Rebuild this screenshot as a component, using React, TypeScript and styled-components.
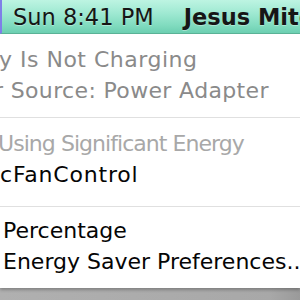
import React from "react";
import styled, { createGlobalStyle } from "styled-components";

const GlobalStyle = createGlobalStyle`
  html, body {
    margin: 0;
    padding: 0;
    background: #a9a9a9;
    overflow: hidden;
  }
`;

const Screen = styled.div`
  width: 300px;
  height: 300px;
  overflow: hidden;
  display: flex;
  flex-direction: column;
  background: linear-gradient(90deg, #b0b0b0 0%, #a8a8a8 90%, #9a9a9a 100%);
  font-family: "DejaVu Sans", "Liberation Sans", sans-serif;
`;

const MenuBar = styled.div`
  height: 33px;
  flex: none;
  display: flex;
  align-items: center;
  gap: 30px;
  padding-left: 11px;
  border-left: 2px solid #7f7fe8;
  border-bottom: 1px solid #5cb598;
  background: linear-gradient(180deg, #bdf4e2 0%, #9fe9d2 40%, #82dcc0 75%, #6ccfb1 100%);
  white-space: nowrap;
  overflow: hidden;
`;

const BarText = styled.span<{ $bold?: boolean }>`
  font-size: 22.5px;
  font-weight: ${(p) => (p.$bold ? 700 : 400)};
  color: #161616;
  text-shadow: 0 1px 0 rgba(255, 255, 255, 0.35);
  line-height: 33px;
  padding-top: 1px;
`;

const Menu = styled.div`
  flex: none;
  background: #ffffff;
  padding: 10px 0 10px;
  box-shadow: 0 2px 3px rgba(0, 0, 0, 0.25);
  overflow: hidden;
`;

const Item = styled.div<{
  $tone: "dim" | "faint" | "normal";
  $offset: number;
  $h?: number;
  $spacing?: number;
}>`
  height: ${(p) => p.$h ?? 31}px;
  line-height: ${(p) => p.$h ?? 31}px;
  font-size: 22px;
  white-space: nowrap;
  margin-left: ${(p) => p.$offset}px;
  letter-spacing: ${(p) => p.$spacing ?? 0}px;
  color: ${(p) =>
    p.$tone === "normal" ? "#050505" : p.$tone === "dim" ? "#8a8a8a" : "#a8a8a8"};
`;

const Separator = styled.div<{ $above: number; $below: number }>`
  height: 1px;
  background: #e0e0e0;
  margin: ${(p) => p.$above}px 0 ${(p) => p.$below}px;
`;

export default function App() {
  return (
    <>
      <GlobalStyle />
      <Screen>
        <MenuBar>
          <BarText>Sun 8:41 PM</BarText>
          <BarText $bold>Jesus Mitchell</BarText>
        </MenuBar>
        <Menu>
          <Item $tone="dim" $offset={-1} $spacing={0.5}>y Is Not Charging</Item>
          <Item $tone="dim" $offset={-6} $spacing={0.35}>r Source: Power Adapter</Item>
          <Separator $above={11} $below={10} />
          <Item $tone="faint" $offset={-2} $spacing={-0.95}>Using Significant Energy</Item>
          <Item $tone="normal" $offset={0} $spacing={0.8}>cFanControl</Item>
          <Separator $above={16} $below={8} />
          <Item $tone="normal" $offset={3}>Percentage</Item>
          <Item $tone="normal" $offset={3} $h={32}>Energy Saver Preferences...</Item>
        </Menu>
      </Screen>
    </>
  );
}
